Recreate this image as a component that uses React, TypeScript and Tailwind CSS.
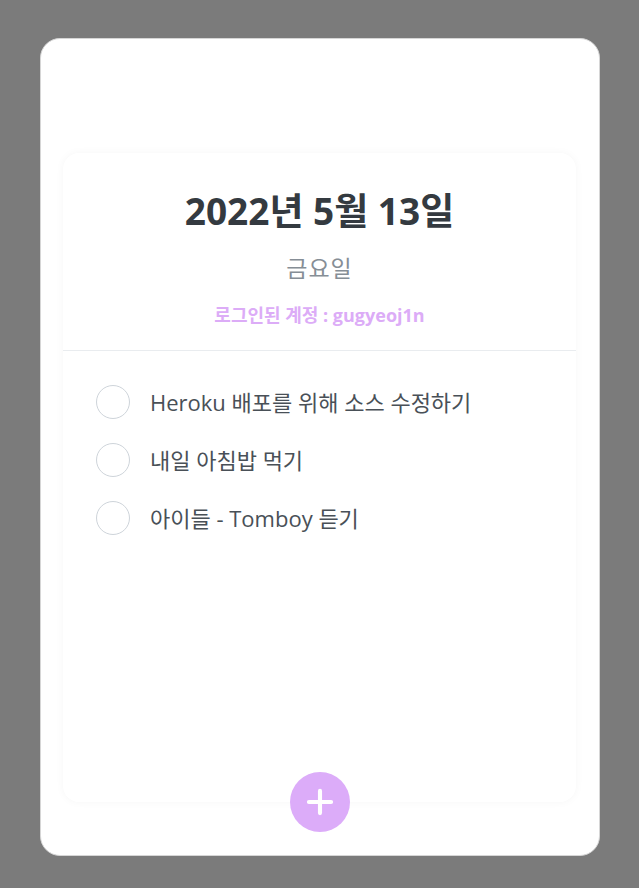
import { Plus } from "lucide-react";

const todos = [
  { id: 1, text: "Heroku 배포를 위해 소스 수정하기" },
  { id: 2, text: "내일 아침밥 먹기" },
  { id: 3, text: "아이들 - Tomboy 듣기" },
];

export default function App() {
  return (
    <div
      className="min-h-screen w-full bg-[#7b7b7b] flex justify-center pt-[38px]"
      style={{ fontFamily: '"Open Sans", "Noto Sans CJK KR", sans-serif' }}
    >
      <div className="w-[560px] h-[818px] bg-white rounded-[20px] border border-[#d6d6d6] flex flex-col items-center pt-[114px]">
        {/* Todo template */}
        <div className="relative w-[513px] h-[649px] bg-white rounded-2xl shadow-[0_0_8px_rgba(0,0,0,0.04)] flex flex-col">
          {/* Header */}
          <div className="h-[198px] border-b border-[#e9ecef] flex flex-col items-center pt-[34px]">
            <h1 className="text-[37px] leading-[48px] font-bold text-[#343a40]">2022년 5월 13일</h1>
            <div className="mt-[18px] text-[23px] leading-[30px] tracking-[1px] text-[#868e96]">금요일</div>
            <div className="mt-[20px] text-[18px] leading-[24px] font-bold text-[#dcacf7]">
              로그인된 계정 : gugyeoj1n
            </div>
          </div>

          {/* List */}
          <div className="flex flex-col pt-[22px] pl-[33px]">
            {todos.map((todo) => (
              <div key={todo.id} className="flex items-center h-[58px]">
                <div className="w-[34px] h-[34px] rounded-full border border-[#ced4da]" />
                <span className="ml-[20px] text-[22px] text-[#495057]">{todo.text}</span>
              </div>
            ))}
          </div>

          {/* Add button */}
          <button className="absolute left-1/2 -translate-x-1/2 bottom-[-30px] w-[60px] h-[60px] rounded-full bg-[#dcacf9] flex items-center justify-center text-white">
            <Plus size={38} strokeWidth={2.6} />
          </button>
        </div>
      </div>
    </div>
  );
}
